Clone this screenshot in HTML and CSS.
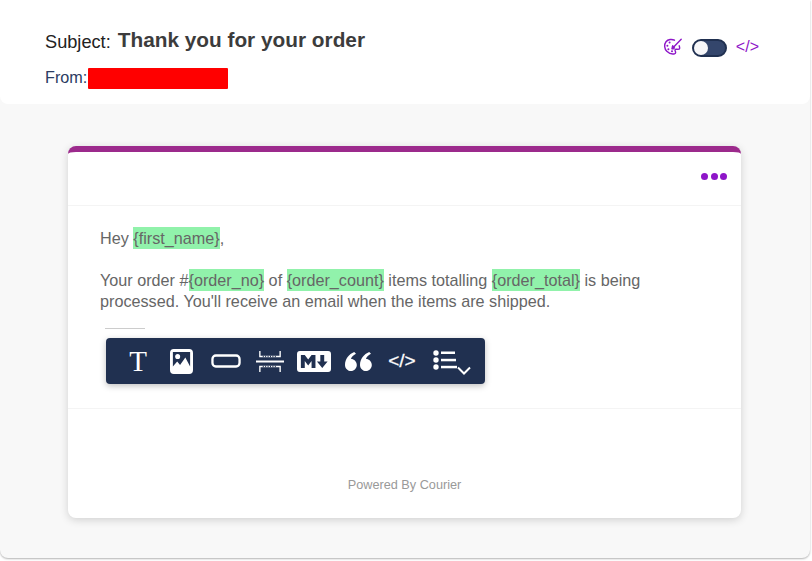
FILE: index.html
```html
<!DOCTYPE html>
<html lang="en">
<head>
<meta charset="utf-8">
<title>Thank you for your order</title>
<link rel="stylesheet" href="styles.css">
</head>
<body>
<div class="frame">
  <header class="header">
    <div class="meta">
      <div class="subject-row"><span class="subject-label">Subject:</span><span class="subject">Thank you for your order</span></div>
      <div class="from-row"><span class="from-label">From:</span><span class="redacted"></span></div>
    </div>
    <div class="tools">
      <svg class="palette" width="20" height="20" viewBox="0 0 20 20" fill="none" stroke="#8e16c8" stroke-width="1.4" stroke-linecap="round" stroke-linejoin="round">
        <path d="M11.5 3.2C9 1.9 5 2.2 3 4.8 .9 7.500 1.300 11.800 3.800 14.200c2 1.900 5.300 3.300 7.700 2.600 1.700-.5 1.100-2 .7-2.800-.5-1-.1-1.900 1.200-1.800 1.200.1 2.900.6 3.200-.7.200-.9-.1-1.900-.4-2.700"/>
        <path d="M9.500 11.300 18.200 2.200"/>
        <path d="M9.400 8.800c1.300.1 2.300 1 2.200 2.300-.1 1-1.500 1.200-3 1 .6-.6.100-2.900.8-3.300z" fill="#8e16c8" stroke-width=".8"/>
        <circle cx="6.600" cy="5.600" r="1" fill="#8e16c8" stroke="none"/>
        <circle cx="4.400" cy="8.800" r="1" fill="#8e16c8" stroke="none"/>
        <circle cx="5.400" cy="12.200" r="1" fill="#8e16c8" stroke="none"/>
        <circle cx="9" cy="14.200" r="1" fill="#8e16c8" stroke="none"/>
      </svg>
      <span class="toggle"><span class="knob"></span></span>
      <span class="code-link">&lt;/&gt;</span>
    </div>
  </header>
  <main class="canvas">
    <section class="card">
      <div class="card-top">
        <span class="dots"><i></i><i></i><i></i></span>
      </div>
      <div class="card-body">
        <p class="para">Hey <span class="var">{first_name}</span>,</p>
        <p class="para">Your order #<span class="var">{order_no}</span> of <span class="var">{order_count}</span> items totalling <span class="var">{order_total}</span> is being processed. You'll receive an email when the items are shipped.</p>
        <div class="rule"></div>
        <div class="toolbar">
          <span class="t-icon">T</span>
          <svg class="i-image" width="23" height="25" viewBox="0 0 24 25" preserveAspectRatio="none"><path fill="#fff" fill-rule="evenodd" d="M4 0h16a4 4 0 0 1 4 4v17a4 4 0 0 1-4 4H4a4 4 0 0 1-4-4V4a4 4 0 0 1 4-4zm-1 3v14.500l4.500-5 3 3.500 5.500-7.500 5 9V3z"/><circle cx="8" cy="7.500" r="2.600" fill="#fff"/></svg>
          <svg class="i-button" width="30" height="14" viewBox="0 0 31 14" preserveAspectRatio="none" fill="none" stroke="#fff" stroke-width="2.400"><rect x="1.500" y="1.500" width="28" height="11" rx="3.500"/></svg>
          <svg class="i-divider" width="28" height="23" viewBox="0 0 29 23" preserveAspectRatio="none" fill="none" stroke="#fff"><path d="M0 11.500h29" stroke-width="2"/><path d="M4 1v5.500h21V1" stroke-width="1.400"/><path d="M7 6.500h15" stroke="#203050" stroke-width="1.500" stroke-dasharray="1 1.500"/><path d="M4 22v-5.500h21V22" stroke-width="1.400"/><path d="M7 16.500h15" stroke="#203050" stroke-width="1.500" stroke-dasharray="1 1.500"/></svg>
          <svg class="i-md" width="34" height="21" viewBox="0 0 35 21" preserveAspectRatio="none"><path fill="#fff" fill-rule="evenodd" d="M3 0h29a3 3 0 0 1 3 3v15a3 3 0 0 1-3 3H3a3 3 0 0 1-3-3V3a3 3 0 0 1 3-3zm1 17h4v-7l3.500 4.500L15 10v7h4V4h-4l-3.500 4.500L8 4H4zM24 4v6.500h-3.500l5.500 6.500 5.500-6.500H28V4z"/></svg>
          <svg class="i-quote" width="27" height="19" viewBox="0 0 27 19" fill="#fff"><path d="M6 7c3.200 0 5.800 2.700 5.800 6S9.200 19 6 19s-6-2.600-6-6.100C0 7 4 2 9.200 0L11 1.800C8 3.500 6.500 5 6 7z"/><path d="M21 7c3.200 0 5.800 2.700 5.800 6s-2.600 6-5.800 6-6-2.600-6-6.100c0-5.900 4-10.900 9.200-12.900L26 1.800c-3 1.700-4.500 3.200-5 5.200z"/></svg>
          <span class="t-code">&lt;/&gt;</span>
          <svg class="i-list" width="38" height="27" viewBox="0 0 38 27" fill="#fff"><circle cx="3" cy="3" r="2.700"/><circle cx="3" cy="10" r="2.700"/><circle cx="3" cy="17" r="2.700"/><rect x="8" y="1.500" width="14" height="2.500"/><rect x="8" y="8.800" width="15" height="2.500"/><rect x="8" y="15.800" width="16" height="2.500"/><path d="M25 17.500l6 6 6-6" fill="none" stroke="#fff" stroke-width="2"/></svg>
        </div>
      </div>
      <footer class="card-foot">Powered By Courier</footer>
    </section>
  </main>
</div>
</body>
</html>
```
FILE: styles.css
```css
* { box-sizing: border-box; }
html, body { margin: 0; padding: 0; height: 100%; background: #fff; overflow: hidden; }
body { font-family: "Liberation Sans", Arial, sans-serif; }
.frame {
  width: 810px;
  height: 558px;
  background: #f8f8f8;
  border-radius: 0 0 8px 8px;
  box-shadow: 0 1px 2px rgba(0,0,0,.3);
  display: flex;
  flex-direction: column;
}
.header {
  height: 104px;
  background: #fff;
  border-radius: 0 0 8px 8px;
  padding: 27px 51px 0 45px;
  display: flex;
  justify-content: space-between;
  align-items: flex-start;
}
.subject-row { display: flex; align-items: flex-start; gap: 7px; }
.subject-label { font-size: 18.2px; line-height: 26px; color: #222; margin-top: 2px; }
.subject { font-size: 20.8px; line-height: 26px; font-weight: 700; color: #3c3c3c; }
.from-row { display: flex; align-items: center; gap: 1px; margin-top: 10px; }
.from-label { font-size: 16.2px; line-height: 21px; color: #2c3c62; }
.redacted { width: 140px; height: 21px; background: #f00; border-radius: 1px; margin-top: 3px; }
.tools { display: flex; align-items: center; gap: 9px; margin-top: 10px; }
.toggle {
  width: 35px; height: 18px; border-radius: 9px; background: #34466c;
  border: 2px solid #203050; display: flex; margin-top: 2px;
}
.knob { width: 14px; height: 14px; border-radius: 50%; background: #f7f7f9; }
.code-link { font-size: 16px; color: #8e16c8; line-height: 20px; }
.canvas { flex: 1; padding: 42px 68px 0; }
.card {
  width: 673px;
  height: 372px;
  background: #fff;
  border-top: 6px solid #9c2a8c;
  border-radius: 8px;
  box-shadow: 0 2px 8px rgba(0,0,0,.16);
  display: flex;
  flex-direction: column;
}
.card-top {
  height: 54px;
  border-bottom: 1px solid #f4f4f4;
  display: flex;
  justify-content: flex-end;
  align-items: flex-start;
  padding: 21px 14px 0 0;
}
.dots { display: flex; gap: 2.500px; }
.dots i { width: 7px; height: 7px; border-radius: 50%; background: #8e16c8; }
.card-body {
  height: 203px;
  border-bottom: 1px solid #f4f4f4;
  padding: 22px 32px 0;
}
.para { margin: 0 0 21px; font-size: 16.200px; line-height: 21px; color: #666; }
.var { background: #91f2ab; padding: 2px 0; }
.rule { width: 40px; height: 1px; background: #ccc; margin: -5px 0 0 5px; }
.toolbar {
  width: 379px;
  height: 46px;
  margin: 9px 0 0 6px;
  background: #203050;
  border-radius: 4px;
  box-shadow: 0 2px 6px rgba(0,0,0,.25);
  display: flex;
  align-items: center;
  padding: 0 0 0 23px;
  color: #fff;
}
.t-icon { font-family: "Liberation Serif", serif; font-size: 29px; line-height: 29px; width: 18px; text-align: center; }
.i-image { margin-left: 23px; }
.i-button { margin-left: 18px; }
.i-divider { margin-left: 15px; }
.i-md { margin-left: 13px; }
.i-quote { margin-left: 14px; }
.t-code { font-size: 19px; line-height: 20px; margin-left: 16px; width: 28px; text-align: center; -webkit-text-stroke: .3px #fff; }
.i-list { margin-left: 17px; margin-top: 4px; }
.card-foot {
  flex: 1;
  font-size: 12.700px;
  color: #999;
  text-align: center;
  padding-top: 69px;
}
```
